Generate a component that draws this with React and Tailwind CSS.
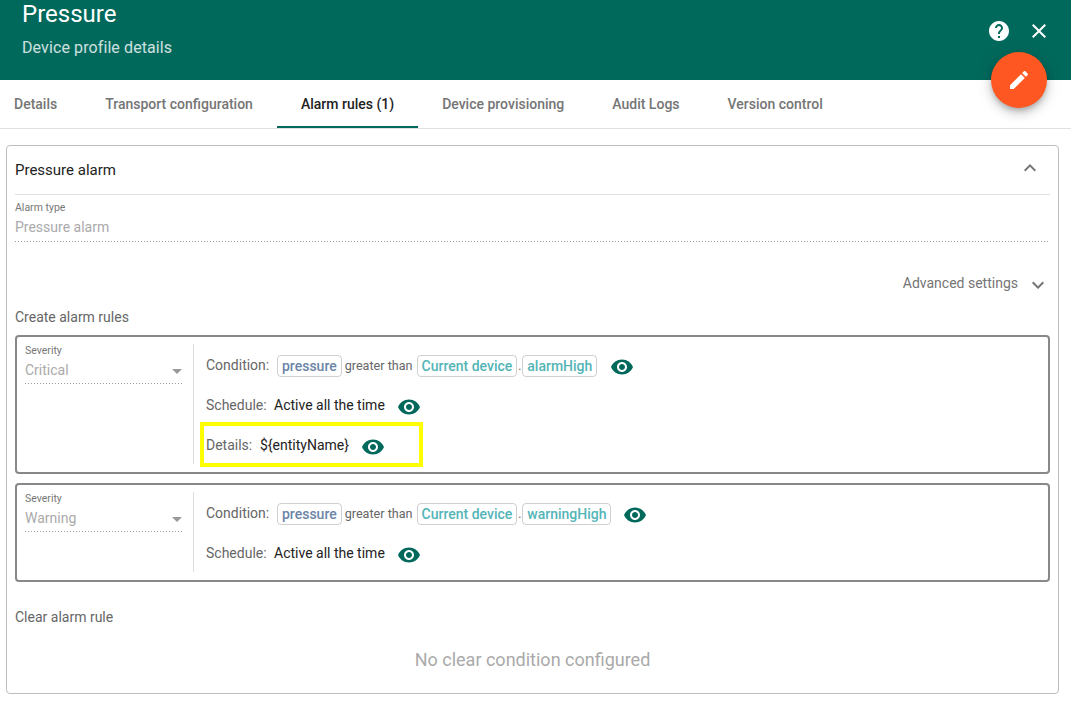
import React from "react";

const Eye = ({ className = "" }) => (
  <svg viewBox="0 0 24 24" className={`w-6 h-6 fill-[#00695c] shrink-0 mt-[3px] ${className}`}>
    <path d="M12 4.5C7 4.5 2.73 7.61 1 12c1.73 4.39 6 7.5 11 7.5s9.27-3.11 11-7.5c-1.73-4.39-6-7.5-11-7.5zM12 17c-2.76 0-5-2.24-5-5s2.24-5 5-5 5 2.24 5 5-2.24 5-5 5zm0-8c-1.66 0-3 1.34-3 3s1.34 3 3 3 3-1.34 3-3-1.34-3-3-3z" />
  </svg>
);

const Dotted = ({ className = "" }) => (
  <div className={`h-px bg-[linear-gradient(to_right,#999_1px,transparent_1px)] bg-[length:3px_1px] ${className}`} />
);

const Chip = ({ color, children }) => (
  <span className={`h-[22px] mt-[2px] flex items-center px-1 border border-[#d0d0d0] rounded font-medium text-[14px] ${color}`}>{children}</span>
);

const Condition = ({ limit, eyeGap }) => (
  <div className="flex items-center h-[22px] text-[14px]">
    <span className="text-[#666] w-[71px]">Condition:</span>
    <Chip color="text-[#6b85a8]">pressure</Chip>
    <span className="text-[#666] text-[12.6px] ml-[3px] mr-[4px] mt-[2px]">greater than</span>
    <Chip color="text-[#53b4b7]">Current device</Chip>
    <span className="text-[#666] text-[12px] w-[5px] text-center mt-[2px]">.</span>
    <Chip color="text-[#53b4b7]">{limit}</Chip>
    <Eye className={eyeGap} />
  </div>
);

const Schedule = () => (
  <div className="flex items-center h-[22px] text-[14px]">
    <span className="text-[#666] w-[68px]">Schedule:</span>
    <span className="text-[#222]">Active all the time</span>
    <Eye className="ml-[12px]" />
  </div>
);

const Severity = ({ value, h }) => (
  <div className={`w-[177px] shrink-0 flex border-r border-[#ddd] pl-2 pr-[10px] ${h}`}>
    <div className="w-full pt-px">
      <div className="text-[10.5px] leading-[12px] text-[#777]">Severity</div>
      <div className="flex items-center justify-between h-[22px] mt-[2px] text-[14px] text-[#aaa]">
        <span>{value}</span>
        <span className="w-0 h-0 border-x-[5px] border-x-transparent border-t-[5px] border-t-[#999] mr-[1px] mt-[2px]" />
      </div>
      <Dotted className="mt-[2px]" />
    </div>
  </div>
);

export default function App() {
  return (
    <div className="relative w-[1071px] h-[722px] overflow-hidden bg-white font-['Roboto',sans-serif]">
      <header className="h-[80px] bg-[#00695c] flex justify-between pl-[22px] pr-[20px] text-white">
        <div>
          <div className="text-[24px] leading-[28px]">Pressure</div>
          <div className="text-[16px] leading-[20px] mt-[10px] text-white/80 tracking-[0.1px]">Device profile details</div>
        </div>
        <div className="flex items-start gap-[16px] pt-[19px]">
          <svg viewBox="0 0 24 24" className="w-6 h-6 fill-white">
            <path d="M12 2C6.48 2 2 6.48 2 12s4.48 10 10 10 10-4.48 10-10S17.52 2 12 2zm1 17h-2v-2h2v2zm2.07-7.75l-.9.92C13.45 12.9 13 13.5 13 15h-2v-.5c0-1.1.45-2.1 1.17-2.83l1.24-1.26c.37-.36.59-.86.59-1.41 0-1.1-.9-2-2-2s-2 .9-2 2H8c0-2.21 1.79-4 4-4s4 1.79 4 4c0 .88-.36 1.68-.93 2.25z" />
          </svg>
          <svg viewBox="0 0 24 24" className="w-6 h-6 fill-white">
            <path d="M19 6.41L17.59 5 12 10.59 6.41 5 5 6.41 10.59 12 5 17.59 6.41 19 12 13.41 17.59 19 19 17.59 13.41 12z" />
          </svg>
        </div>
      </header>

      <button className="absolute left-[991px] top-[52px] w-[56px] h-[56px] rounded-full bg-[#ff5722] flex items-center justify-center shadow-[0_3px_5px_-1px_rgba(0,0,0,0.2),0_6px_10px_0_rgba(0,0,0,0.14),0_1px_18px_0_rgba(0,0,0,0.12)]">
        <svg viewBox="0 0 24 24" className="w-6 h-6 fill-white">
          <path d="M3 17.25V21h3.75L17.81 9.94l-3.75-3.75L3 17.25zM20.71 7.04c.39-.39.39-1.02 0-1.41l-2.34-2.34c-.39-.39-1.02-.39-1.41 0l-1.83 1.83 3.75 3.75 1.83-1.83z" />
        </svg>
      </button>

      <nav className="h-[49px] border-b border-[#e0e0e0] flex text-[14px] font-medium text-[#757575]">
        <div className="h-full flex items-center pt-[2px] pl-[14px] pr-[24px] border-b-2 border-transparent">Details</div>
        <div className="h-full flex items-center pt-[2px] px-[24px] border-b-2 border-transparent">Transport configuration</div>
        <div className="h-[48px] flex items-center pt-[2px] px-[24px] border-b-2 border-[#00695c] text-[#222]">Alarm rules (1)</div>
        <div className="h-full flex items-center pt-[2px] px-[24px] border-b-2 border-transparent">Device provisioning</div>
        <div className="h-full flex items-center pt-[2px] px-[24px] border-b-2 border-transparent">Audit Logs</div>
        <div className="h-full flex items-center pt-[2px] px-[24px] border-b-2 border-transparent">Version control</div>
      </nav>

      <section className="ml-[6px] mt-[16px] w-[1053px] h-[549px] border border-[#bdbdbd] rounded px-[8px]">
        <div className="h-[49px] border-b border-[#e0e0e0] flex items-center justify-between">
          <span className="text-[15px] text-[#222] mt-[1px]">Pressure alarm</span>
          <svg viewBox="0 0 24 24" className="w-6 h-6 fill-[#757575] mr-[8px] mt-[-5px]">
            <path d="M7.41 15.41L12 10.83l4.59 4.58L18 14l-6-6-6 6z" />
          </svg>
        </div>

        <div className="text-[10.5px] leading-[12px] text-[#777] mt-[7px]">Alarm type</div>
        <div className="text-[14px] leading-[20px] text-[#aaa] mt-[3px]">Pressure alarm</div>
        <Dotted className="mt-[4px] w-[1033px]" />

        <div className="flex justify-end items-center mt-[29px] h-[24px] text-[14px] text-[#757575]">
          <span>Advanced settings</span>
          <svg viewBox="0 0 24 24" className="w-6 h-6 fill-[#757575] ml-[8px] mt-[4px]">
            <path d="M16.59 8.59L12 13.17 7.41 8.59 6 10l6 6 6-6z" />
          </svg>
        </div>

        <div className="text-[14px] leading-[16px] text-[#666] mt-[14px]">Create alarm rules</div>

        <div className="mt-[10px] h-[139px] border-2 border-[#888] rounded flex py-[7px]">
          <Severity value="Critical" h="h-[120px]" />
          <div className="pl-[12px] pt-[10px]">
            <Condition limit="alarmHigh" eyeGap="ml-[13px]" />
            <div className="mt-[18px]"><Schedule /></div>
            <div className="mt-[6px] -ml-[6px] w-[223px] h-[45px] border-4 border-[#ffff00] flex items-center pl-[2px] pt-[1px] text-[14px]">
              <span className="text-[#666] w-[54px]">Details:</span>
              <span className="text-[#222]">{"${entityName}"}</span>
              <Eye className="ml-[12px]" />
            </div>
          </div>
        </div>

        <div className="mt-[9px] h-[99px] border-2 border-[#888] rounded flex py-[7px]">
          <Severity value="Warning" h="h-[80px]" />
          <div className="pl-[12px] pt-[10px]">
            <Condition limit="warningHigh" eyeGap="ml-[12px]" />
            <div className="mt-[18px]"><Schedule /></div>
          </div>
        </div>

        <div className="text-[14px] leading-[16px] text-[#666] mt-[27px]">Clear alarm rule</div>
        <div className="text-center text-[18px] leading-[24px] text-[#aaa] mt-[23px]">No clear condition configured</div>
      </section>
    </div>
  );
}
